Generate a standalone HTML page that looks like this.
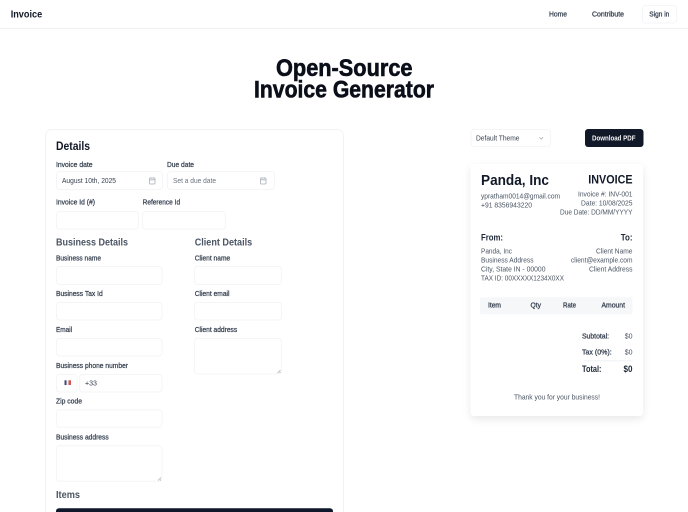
<!DOCTYPE html>
<html lang="en"><head><meta charset="utf-8"><title>Invoice</title>
<style>
html,body{margin:0;padding:0;background:#fff;width:688px;height:512px;overflow:hidden}
svg{position:absolute;left:0;top:0;filter:blur(.22px)}
text{font-family:"Liberation Sans",sans-serif;fill:#4b5563;font-size:7.2px}
.b{font-weight:700}
.l{fill:#374151;font-size:7.2px;stroke:#374151;stroke-width:.25}
.h{fill:#4b5563;font-size:10.3px;font-weight:700}
.n{fill:#374151;font-size:7.2px;stroke:#374151;stroke-width:.28}
.t{font-size:24.2px;font-weight:700;fill:#0b0f19;stroke:#0b0f19;stroke-width:.6}
.box{fill:#fff;stroke:#f4f5f7;stroke-width:1}
</style></head><body>
<svg width="688" height="512" viewBox="0 0 688 512" xmlns="http://www.w3.org/2000/svg">
<rect x="0" y="28" width="688" height="1" fill="#f0f1f4"/>
<text x="10.7" y="17.5" textLength="31.5" lengthAdjust="spacingAndGlyphs" class="b" style="font-size:10.3px;fill:#111827">Invoice</text>
<text x="549" y="16.5" textLength="18" lengthAdjust="spacingAndGlyphs" class="n">Home</text>
<text x="592" y="16.5" textLength="32" lengthAdjust="spacingAndGlyphs" class="n">Contribute</text>
<rect x="642.5" y="5.5" width="34" height="17.5" rx="3" class="box"/>
<text x="649.3" y="16.5" textLength="20" lengthAdjust="spacingAndGlyphs" class="n">Sign in</text>

<text x="276" y="76" textLength="136.5" lengthAdjust="spacingAndGlyphs" class="t">Open-Source</text>
<text x="254" y="97.5" textLength="180" lengthAdjust="spacingAndGlyphs" class="t">Invoice Generator</text>

<rect x="45.5" y="129.5" width="298" height="400" rx="6" fill="#fff" stroke="#f1f2f5"/>
<text x="56" y="149.8" textLength="34" lengthAdjust="spacingAndGlyphs" class="b" style="font-size:12.2px;fill:#111827">Details</text>

<text x="56" y="167" textLength="36.500" lengthAdjust="spacingAndGlyphs" class="l">Invoice date</text>
<text x="167" y="167" textLength="27" lengthAdjust="spacingAndGlyphs" class="l">Due date</text>
<rect x="56.500" y="171.500" width="106" height="18" rx="3" class="box"/>
<rect x="167.500" y="171.500" width="107" height="18" rx="3" class="box"/>
<text x="62" y="183" textLength="54" lengthAdjust="spacingAndGlyphs" style="fill:#374151">August 10th, 2025</text>
<text x="173" y="183" textLength="43" lengthAdjust="spacingAndGlyphs" style="fill:#6b7280">Set a due date</text>
<g fill="none" stroke="#a8aeb8" stroke-width=".8">
<rect x="149.500" y="178" width="5.500" height="6" rx=".8"/><path d="M149.500 179.800h5.500M151 177.200v1.300M153.600 177.200v1.300"/>
<rect x="260.500" y="178" width="5.500" height="6" rx=".8"/><path d="M260.500 179.800h5.500M262 177.200v1.300M264.600 177.200v1.300"/>
</g>

<text x="56" y="204.700" textLength="39" lengthAdjust="spacingAndGlyphs" class="l">Invoice Id (#)</text>
<text x="142.600" y="204.700" textLength="37.500" lengthAdjust="spacingAndGlyphs" class="l">Reference Id</text>
<rect x="56.500" y="211.500" width="82" height="17.500" rx="3" class="box"/>
<rect x="142.500" y="211.500" width="83" height="17.500" rx="3" class="box"/>

<text x="56" y="245.500" textLength="72" lengthAdjust="spacingAndGlyphs" class="h">Business Details</text>
<text x="194.700" y="245.500" textLength="57.500" lengthAdjust="spacingAndGlyphs" class="h">Client Details</text>

<text x="56" y="260.300" textLength="45" lengthAdjust="spacingAndGlyphs" class="l">Business name</text>
<text x="194.700" y="260.300" textLength="35.500" lengthAdjust="spacingAndGlyphs" class="l">Client name</text>
<rect x="56.500" y="266.500" width="105.500" height="18" rx="3" class="box"/>
<rect x="194.500" y="266.500" width="87" height="18" rx="3" class="box"/>

<text x="56" y="296" textLength="46.700" lengthAdjust="spacingAndGlyphs" class="l">Business Tax Id</text>
<text x="194.700" y="296" textLength="34.800" lengthAdjust="spacingAndGlyphs" class="l">Client email</text>
<rect x="56.500" y="302.500" width="105.500" height="17.500" rx="3" class="box"/>
<rect x="194.500" y="302.500" width="87" height="17.500" rx="3" class="box"/>

<text x="56" y="332" textLength="16" lengthAdjust="spacingAndGlyphs" class="l">Email</text>
<text x="194.700" y="332" textLength="42.500" lengthAdjust="spacingAndGlyphs" class="l">Client address</text>
<rect x="56.500" y="338.500" width="105.500" height="17.500" rx="3" class="box"/>
<rect x="194.500" y="338.500" width="87" height="35.500" rx="3" class="box"/>
<path d="M277.500 373l3-3M279.500 373l1-1" stroke="#9ca3af" stroke-width=".6" fill="none"/>

<text x="56" y="368" textLength="72" lengthAdjust="spacingAndGlyphs" class="l">Business phone number</text>
<rect x="56.500" y="374.500" width="20.500" height="17.500" rx="3" class="box"/>
<rect x="79.500" y="374.500" width="82.500" height="17.500" rx="3" class="box"/>
<rect x="64.500" y="380.300" width="2" height="4.700" fill="#3b4a7a"/>
<rect x="66.500" y="380.300" width="2" height="4.700" fill="#eceef2"/>
<rect x="68.500" y="380.300" width="2.500" height="4.700" fill="#d9534f"/>
<text x="85" y="385.500" textLength="12" lengthAdjust="spacingAndGlyphs" style="fill:#374151">+33</text>

<text x="56" y="403.600" textLength="26" lengthAdjust="spacingAndGlyphs" class="l">Zip code</text>
<rect x="56.500" y="409.800" width="105.500" height="17.500" rx="3" class="box"/>

<text x="56" y="439.300" textLength="52.700" lengthAdjust="spacingAndGlyphs" class="l">Business address</text>
<rect x="56.500" y="445.800" width="105.500" height="35.500" rx="3" class="box"/>
<path d="M158 480.500l3-3M160 480.500l1-1" stroke="#9ca3af" stroke-width=".6" fill="none"/>

<text x="56" y="497.800" textLength="24" lengthAdjust="spacingAndGlyphs" class="h">Items</text>
<rect x="56" y="508.300" width="277" height="20" rx="3" fill="#0f172a"/>

<rect x="471" y="129.500" width="79.500" height="17" rx="3" class="box"/>
<text x="476" y="140.300" textLength="43.500" lengthAdjust="spacingAndGlyphs" style="fill:#374151">Default Theme</text>
<path d="M539.500 137.300l1.800 1.800 1.800-1.800" fill="none" stroke="#9ca3af" stroke-width=".7"/>
<rect x="585" y="129" width="58.500" height="18" rx="3" fill="#111827"/>
<text x="592" y="140.500" textLength="43.500" lengthAdjust="spacingAndGlyphs" class="b" style="fill:#f3f4f6">Download PDF</text>

<defs><filter id="s" x="-20%" y="-20%" width="140%" height="140%"><feDropShadow dx="0" dy="3" stdDeviation="4" flood-color="#000" flood-opacity=".09"/></filter></defs>
<rect x="470.500" y="164" width="172.500" height="252" rx="4" fill="#fff" filter="url(#s)"/>

<text x="481" y="185" textLength="68" lengthAdjust="spacingAndGlyphs" class="b" style="font-size:15px;fill:#111827">Panda, Inc</text>
<text x="588.300" y="183.300" textLength="44.200" lengthAdjust="spacingAndGlyphs" class="b" style="font-size:12px;fill:#111827">INVOICE</text>
<text x="481" y="198.300" textLength="79" lengthAdjust="spacingAndGlyphs">ypratham0014@gmail.com</text>
<text x="481" y="207.400" textLength="51" lengthAdjust="spacingAndGlyphs">+91 8356943220</text>
<text x="578" y="196.700" textLength="54.500" lengthAdjust="spacingAndGlyphs">Invoice #: INV-001</text>
<text x="581" y="205.700" textLength="51.500" lengthAdjust="spacingAndGlyphs">Date: 10/08/2025</text>
<text x="560" y="214.700" textLength="72.500" lengthAdjust="spacingAndGlyphs">Due Date: DD/MM/YYYY</text>

<text x="481" y="240.300" textLength="22" lengthAdjust="spacingAndGlyphs" class="b" style="font-size:8.800px;fill:#1f2937">From:</text>
<text x="620.700" y="240.300" textLength="11.800" lengthAdjust="spacingAndGlyphs" class="b" style="font-size:8.800px;fill:#1f2937">To:</text>
<text x="481" y="253.700" textLength="31" lengthAdjust="spacingAndGlyphs">Panda, Inc</text>
<text x="481" y="262.700" textLength="52.500" lengthAdjust="spacingAndGlyphs">Business Address</text>
<text x="481" y="271.700" textLength="64.500" lengthAdjust="spacingAndGlyphs">City, State IN - 00000</text>
<text x="481" y="280.700" textLength="83" lengthAdjust="spacingAndGlyphs">TAX ID: 00XXXXX1234X0XX</text>
<text x="596" y="253.700" textLength="36.500" lengthAdjust="spacingAndGlyphs">Client Name</text>
<text x="571" y="262.700" textLength="61.500" lengthAdjust="spacingAndGlyphs">client@example.com</text>
<text x="589" y="271.700" textLength="43.500" lengthAdjust="spacingAndGlyphs">Client Address</text>

<rect x="480" y="297.300" width="152.500" height="17" rx="2" fill="#f6f7f9"/>
<text x="488" y="307.600" textLength="13" lengthAdjust="spacingAndGlyphs" class="n">Item</text>
<text x="530.500" y="307.600" textLength="10.500" lengthAdjust="spacingAndGlyphs" class="n">Qty</text>
<text x="563" y="307.600" textLength="13" lengthAdjust="spacingAndGlyphs" class="n">Rate</text>
<text x="601.500" y="307.600" textLength="23.500" lengthAdjust="spacingAndGlyphs" class="n">Amount</text>

<text x="582" y="338.300" textLength="27" lengthAdjust="spacingAndGlyphs" class="n">Subtotal:</text>
<text x="624.700" y="338.300" textLength="7.800" lengthAdjust="spacingAndGlyphs">$0</text>
<text x="582" y="354.300" textLength="29.700" lengthAdjust="spacingAndGlyphs" class="n">Tax (0%):</text>
<text x="624.700" y="354.300" textLength="7.800" lengthAdjust="spacingAndGlyphs">$0</text>
<rect x="584" y="360.500" width="48.500" height=".7" fill="#e9ebee"/>
<text x="582" y="372" textLength="19.500" lengthAdjust="spacingAndGlyphs" class="b" style="font-size:8.800px;fill:#1f2937">Total:</text>
<text x="623.500" y="372" textLength="9" lengthAdjust="spacingAndGlyphs" class="b" style="font-size:8.800px;fill:#1f2937">$0</text>
<text x="514" y="399.500" textLength="86" lengthAdjust="spacingAndGlyphs">Thank you for your business!</text>
</svg>
</body></html>
